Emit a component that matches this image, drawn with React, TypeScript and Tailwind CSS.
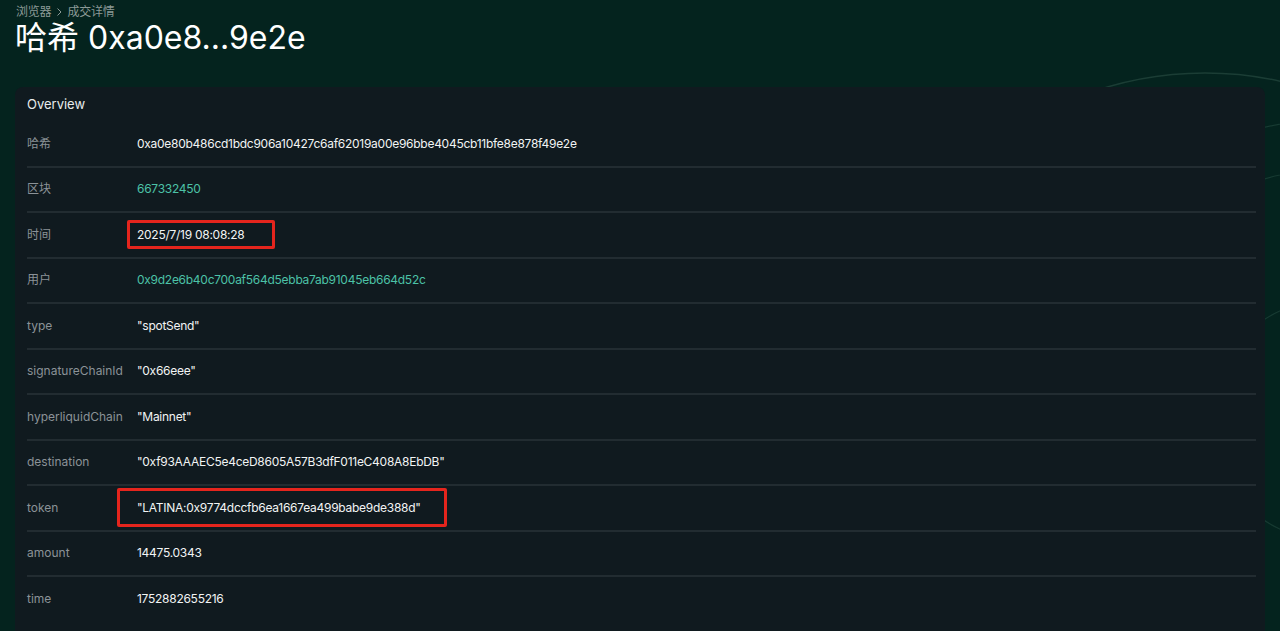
import React from "react";

const rows: { label: string; value: string; link?: boolean; box?: "time" | "token" }[] = [
  { label: "哈希", value: "0xa0e80b486cd1bdc906a10427c6af62019a00e96bbe4045cb11bfe8e878f49e2e" },
  { label: "区块", value: "667332450", link: true },
  { label: "时间", value: "2025/7/19 08:08:28", box: "time" },
  { label: "用户", value: "0x9d2e6b40c700af564d5ebba7ab91045eb664d52c", link: true },
  { label: "type", value: '"spotSend"' },
  { label: "signatureChainId", value: '"0x66eee"' },
  { label: "hyperliquidChain", value: '"Mainnet"' },
  { label: "destination", value: '"0xf93AAAEC5e4ceD8605A57B3dfF011eC408A8EbDB"' },
  { label: "token", value: '"LATINA:0x9774dccfb6ea1667ea499babe9de388d"', box: "token" },
  { label: "amount", value: "14475.0343" },
  { label: "time", value: "1752882655216" },
];

export default function App() {
  return (
    <div
      className="relative w-full h-[631px] overflow-hidden bg-[#04231e]"
      style={{ fontFamily: "Inter, 'Noto Sans CJK SC', sans-serif" }}
    >
      <svg className="absolute inset-0" width="1280" height="631" viewBox="0 0 1280 631" fill="none">
        <circle cx="1205" cy="420" r="347" stroke="#1b3d35" strokeWidth="1.5" />
        <circle cx="1330" cy="420" r="300" stroke="#173a32" strokeWidth="1.2" />
        <circle cx="1330" cy="420" r="250" stroke="#173a32" strokeWidth="1.2" />
        <circle cx="1330" cy="420" r="120" stroke="#173a32" strokeWidth="1.2" />
      </svg>
      <div className="relative px-4 pt-[5px]">
        <div className="flex items-center gap-[3px] text-[12px] leading-[14px] text-[#8c9a97] tracking-[-0.2px]">
          <span>浏览器</span>
          <svg width="10" height="10" viewBox="0 0 10 10" fill="none">
            <path d="M3.5 1.5 L7 5 L3.5 8.5" stroke="#8c9a97" strokeWidth="1" />
          </svg>
          <span>成交详情</span>
        </div>
        <h1 className="text-[32px] leading-[40px] text-white font-normal -ml-[1px] -mt-[1px]">
          哈希 0xa0e8...9e2e
        </h1>
      </div>
      <div className="relative mx-[15px] mt-[29px] w-[1250px] rounded-lg bg-[#101a1f] pl-3 pr-[9px] pb-6">
        <div className="h-[35px] flex items-center text-[13px] text-[#e8ecec] pt-[1px]">Overview</div>
        {rows.map((r) => (
          <div
            key={r.label}
            className="h-[45.5px] flex items-center border-b-2 border-[#222c31] last:border-b-0 last:pb-[2px] text-[12px]"
          >
            <div className="w-[110px] text-[#8b9297]">{r.label}</div>
            <div className="relative leading-[16px]">
              <span className={(r.link ? "text-[#4cc2a7]" : "text-[#f2f4f4]") + " tracking-[-0.27px]"}>{r.value}</span>
              {r.box === "time" && (
                <div className="absolute left-[-10px] top-[-7px] w-[148px] h-[29px] border-[3px] border-[#e5251d] rounded-[2px]" />
              )}
              {r.box === "token" && (
                <div className="absolute left-[-20px] top-[-12px] w-[330px] h-[39px] border-[3px] border-[#e5251d] rounded-[2px]" />
              )}
            </div>
          </div>
        ))}
      </div>
    </div>
  );
}
